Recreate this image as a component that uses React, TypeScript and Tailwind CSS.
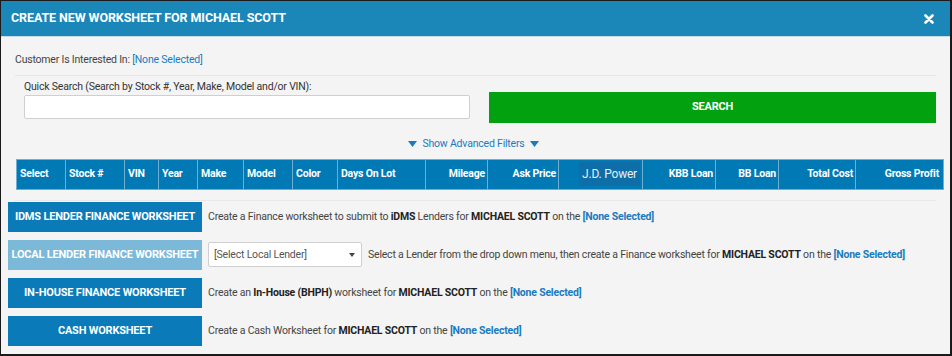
import React from "react";

const columns: { label: string; w: string; right?: boolean; soft?: boolean }[] = [
  { label: "Select", w: "w-[48px]" },
  { label: "Stock #", w: "w-[59px]" },
  { label: "VIN", w: "w-[34px]" },
  { label: "Year", w: "w-[39px]" },
  { label: "Make", w: "w-[46px]" },
  { label: "Model", w: "w-[49px]" },
  { label: "Color", w: "w-[45px]" },
  { label: "Days On Lot", w: "w-[88px]" },
  { label: "Mileage", w: "w-[62px]", right: true },
  { label: "Ask Price", w: "w-[71px]", right: true },
  { label: "J.D. Power", w: "w-[84px]", right: true, soft: true },
  { label: "KBB Loan", w: "w-[73px]", right: true },
  { label: "BB Loan", w: "w-[63px]", right: true },
  { label: "Total Cost", w: "w-[77px]", right: true },
  { label: "Gross Profit", w: "w-[86px]", right: true },
];

const Caret = () => (
  <svg width="9" height="6" viewBox="0 0 9 6" className="inline-block">
    <path d="M0 0h9L4.5 6z" fill="#1a7bbf" />
  </svg>
);

const Who = () => <b className="font-bold text-[#222]">MICHAEL SCOTT</b>;
const None = () => <b className="font-bold text-[#1a7bbf]">[None Selected]</b>;

const WorkBtn = ({ label, light }: { label: string; light?: boolean }) => (
  <button
    className={`w-[194px] h-[30px] shrink-0 flex items-center justify-center text-[11px] font-bold text-white uppercase whitespace-nowrap overflow-hidden ${
      light ? "bg-[#7cb8d8]" : "bg-[#0a7bb8]"
    }`}
  >
    {label}
  </button>
);

export default function App() {
  return (
    <div
      className="w-[952px] h-[356px] bg-[#f4f4f4] border-t border-l border-r-2 border-b-2 border-[#1a1a1a] overflow-hidden text-[10.5px] tracking-[-0.2px] text-[#444]"
      style={{ fontFamily: "Roboto, 'Liberation Sans', sans-serif" }}
    >
      {/* header */}
      <div className="h-[36px] bg-[#1b87b8] border-b border-[#c9dbe4] flex items-center justify-between pl-[10px] pr-[16px]">
        <h1 className="text-white font-bold text-[12.5px] tracking-[-0.1px]">CREATE NEW WORKSHEET FOR MICHAEL SCOTT</h1>
        <svg width="10" height="10" viewBox="0 0 10 10">
          <path d="M1.5 1.5l7 7M8.5 1.5l-7 7" stroke="#fff" strokeWidth="2.6" strokeLinecap="round" />
        </svg>
      </div>

      <div className="px-[14px] pt-[16px]">
        <div className="h-[14px] flex items-center">
          Customer Is Interested In:&nbsp;<span className="text-[#1a7bbf]">[None Selected]</span>
        </div>
        <div className="mt-[8px] border-t border-[#e6e6e6]" />

        {/* quick search */}
        <div className="flex items-end gap-[19px] pl-[9px] mt-[4px]">
          <div className="w-[448px]">
            <div className="h-[14px] flex items-center text-[#333]">Quick Search (Search by Stock #, Year, Make, Model and/or VIN):</div>
            <input className="mt-[1px] w-full h-[24px] bg-white border border-[#cfcfcf] rounded-[2px]" />
          </div>
          <button className="w-[449px] h-[31px] mb-[-4px] bg-[#02a10f] text-white font-bold text-[11px]">SEARCH</button>
        </div>

        <div className="mt-[17px] flex items-center justify-center gap-[5px] text-[#1a7bbf] pr-[4px]">
          <Caret />
          <span>Show Advanced Filters</span>
          <Caret />
        </div>

        {/* table header */}
        <div className="mt-[7px] ml-[1px] w-[928px] flex bg-[#0079b5] border border-[#6eaed2] h-[31px]">
          {columns.map((c, i) => (
            <div
              key={c.label}
              className={`${c.w} shrink-0 h-full flex items-center font-bold text-white whitespace-nowrap ${
                i > 0 ? "border-l border-[#6eaed2]" : ""
              } ${c.right ? "justify-end pr-[2px]" : "pl-[3px]"} ${c.soft ? "pr-0" : ""}`}
            >
              {c.soft ? (
                <span className="bg-[#0d6ea8] px-[3px] py-[3px] font-normal text-[12px] text-[#e4f1f8]">{c.label}</span>
              ) : (
                c.label
              )}
            </div>
          ))}
        </div>
        <div className="mt-[10px] border-t border-[#e8e8e8]" />
      </div>

      {/* worksheets */}
      <div className="pl-[7px] mt-[1px] flex flex-col gap-[8px]">
        <div className="flex items-center gap-[6px]">
          <WorkBtn label="IDMS Lender Finance Worksheet" />
          <span>
            Create a Finance worksheet to submit to <b className="font-bold text-[#222]">iDMS</b> Lenders for <Who /> on the <None />
          </span>
        </div>
        <div className="flex items-center gap-[6px]">
          <WorkBtn label="Local Lender Finance Worksheet" light />
          <div className="w-[154px] h-[25px] bg-white border border-[#cfcfcf] rounded-[2px] flex items-center justify-between pl-[5px] pr-[6px] text-[#555]">
            <span>[Select Local Lender]</span>
            <svg width="6" height="4" viewBox="0 0 6 4">
              <path d="M0 0h6L3 4z" fill="#444" />
            </svg>
          </div>
          <span className="whitespace-nowrap">
            Select a Lender from the drop down menu, then create a Finance worksheet for <Who /> on the <None />
          </span>
        </div>
        <div className="flex items-center gap-[6px]">
          <WorkBtn label="In-House Finance Worksheet" />
          <span>
            Create an <b className="font-bold text-[#222]">In-House (BHPH)</b> worksheet for <Who /> on the <None />
          </span>
        </div>
        <div className="flex items-center gap-[6px]">
          <WorkBtn label="Cash Worksheet" />
          <span>
            Create a Cash Worksheet for <Who /> on the <None />
          </span>
        </div>
      </div>
    </div>
  );
}
